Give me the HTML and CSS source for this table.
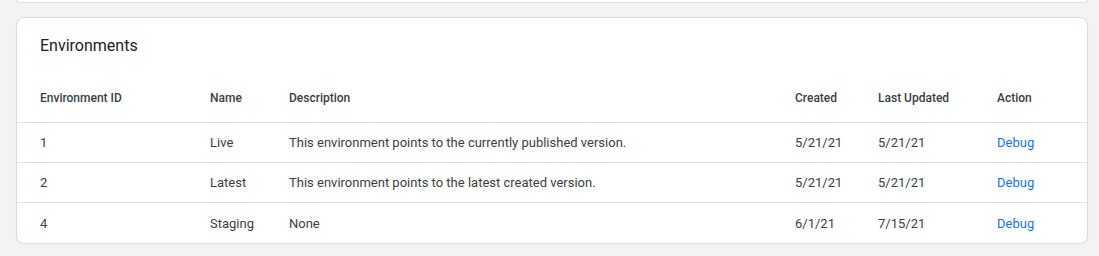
FILE: index.html
```html
<!DOCTYPE html>
<html lang="en">
<head>
<meta charset="utf-8">
<title>Environments</title>
<link rel="stylesheet" href="styles.css">
</head>
<body>
<div class="page">
  <div class="prev-card"></div>
  <section class="card">
    <h2 class="card-title">Environments</h2>
    <div class="table">
      <div class="row head">
        <div class="cell">Environment ID</div>
        <div class="cell">Name</div>
        <div class="cell">Description</div>
        <div class="cell">Created</div>
        <div class="cell">Last Updated</div>
        <div class="cell">Action</div>
      </div>
      <div class="row">
        <div class="cell">1</div>
        <div class="cell">Live</div>
        <div class="cell">This environment points to the currently published version.</div>
        <div class="cell">5/21/21</div>
        <div class="cell">5/21/21</div>
        <div class="cell"><a class="link" href="#">Debug</a></div>
      </div>
      <div class="row">
        <div class="cell">2</div>
        <div class="cell">Latest</div>
        <div class="cell">This environment points to the latest created version.</div>
        <div class="cell">5/21/21</div>
        <div class="cell">5/21/21</div>
        <div class="cell"><a class="link" href="#">Debug</a></div>
      </div>
      <div class="row last">
        <div class="cell">4</div>
        <div class="cell">Staging</div>
        <div class="cell">None</div>
        <div class="cell">6/1/21</div>
        <div class="cell">7/15/21</div>
        <div class="cell"><a class="link" href="#">Debug</a></div>
      </div>
    </div>
  </section>
</div>
</body>
</html>
```

FILE: styles.css
```css
* { box-sizing: border-box; }

html, body {
  margin: 0;
  background: #f1f3f4;
  font-family: Roboto, "Noto Sans", Arial, sans-serif;
  color: #3c4043;
}

.page {
  padding: 0 11px 0 16px;
}

.prev-card {
  height: 3px;
  background: #fff;
  border: 1px solid #dadce0;
  border-top: none;
  border-radius: 0 0 8px 8px;
}

.card {
  margin-top: 14px;
  background: #fff;
  border: 1px solid #dadce0;
  border-radius: 8px;
  overflow: hidden;
  box-shadow: 0 1px 1px rgba(60, 64, 67, 0.08);
}

.card-title {
  margin: 0;
  padding: 16px 23px;
  font-size: 16px;
  line-height: 24px;
  font-weight: 400;
  color: #202124;
}

.row {
  display: grid;
  grid-template-columns: 170px 79px 506px 83px 119px 1fr;
  padding-left: 23px;
  height: 40px;
  align-items: center;
  border-bottom: 1px solid #e0e0e0;
  font-size: 13px;
  color: #3c4043;
}

.row.head {
  height: 49px;
  padding-bottom: 1px;
  font-size: 12px;
  font-weight: 500;
  color: #3c4043;
}

.row.last {
  border-bottom: none;
}

.cell {
  white-space: nowrap;
}

.link {
  color: #1a73e8;
  text-decoration: none;
}
```
